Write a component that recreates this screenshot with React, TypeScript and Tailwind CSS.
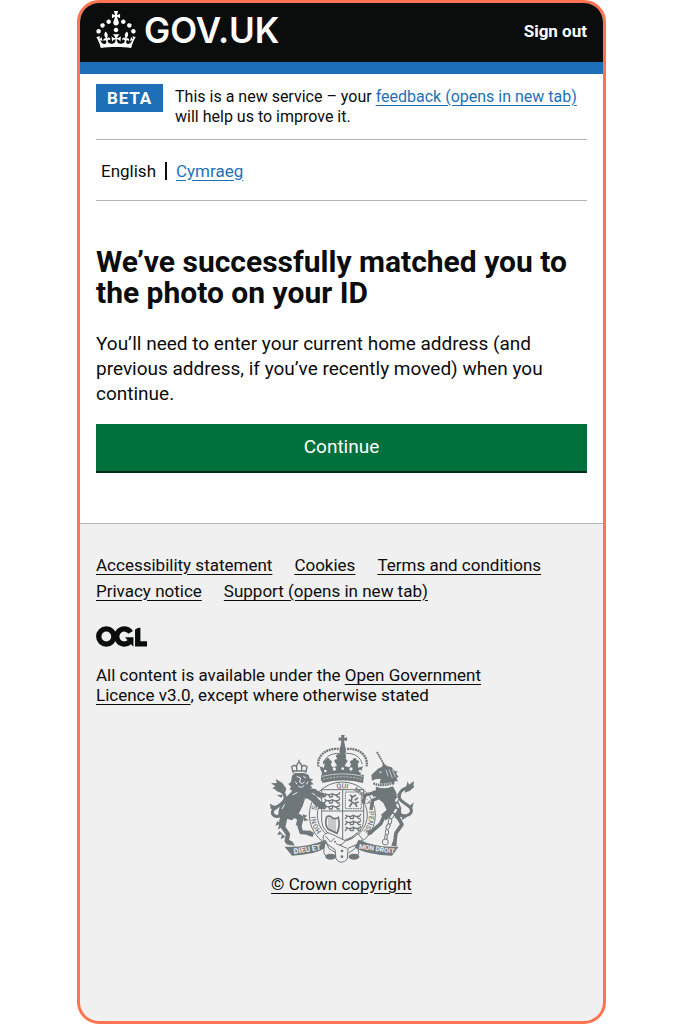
import React from "react";

type TLink = { label: string; href: string };

const footerLinks: TLink[] = [
  { label: "Accessibility statement", href: "#accessibility" },
  { label: "Cookies", href: "#cookies" },
  { label: "Terms and conditions", href: "#terms" },
  { label: "Privacy notice", href: "#privacy" },
  { label: "Support (opens in new tab)", href: "#support" },
];

const Crown = () => (
  <svg viewBox="0 0 32 30" className="w-10 h-[37px]" fill="currentColor" aria-hidden="true">
    <path d="M22.6 10.4c-1 .4-2-.1-2.4-1-.4-.9.1-2 1-2.4.9-.4 2 .1 2.4 1s-.1 2-1 2.4m-5.9 6.7c-.9.4-2-.1-2.4-1-.4-.9.1-2 1-2.4.9-.4 2 .1 2.4 1s-.1 2-1 2.4m10.8-3.7c-1 .4-2-.1-2.4-1-.4-.9.1-2 1-2.4.9-.4 2 .1 2.4 1s0 2-1 2.4m3.3 4.8c-1 .4-2-.1-2.4-1-.4-.9.1-2 1-2.4.9-.4 2 .1 2.4 1s-.1 2-1 2.4M17 4.7l2.3 1.2V2.5l-2.3.7-.2-.2.9-3h-3.4l.9 3-.2.2c-.1.1-2.3-.7-2.3-.7v3.4L15 4.7c.1.1.1.2.2.2l-1.3 4c-.1.2-.1.4-.1.6 0 1.1.8 2 1.9 2.2h.7c1-.2 1.9-1.1 1.9-2.1 0-.2 0-.4-.1-.6l-1.3-4c-.1-.2 0-.2.1-.3m-7.6 5.7c.9.4 2-.1 2.4-1 .4-.9-.1-2-1-2.4-.9-.4-2 .1-2.4 1s0 2 1 2.4m-5 3c.9.4 2-.1 2.4-1 .4-.9-.1-2-1-2.4-.9-.4-2 .1-2.4 1s.1 2 1 2.4m-3.2 4.8c.9.4 2-.1 2.4-1 .4-.9-.1-2-1-2.4-.9-.4-2 .1-2.4 1s0 2 1 2.4m14.8 11c4.4 0 8.6.3 12.3.8 1.1-4.5 2.4-7 3.7-8.8l-2.5-.9c.2 1.3.3 1.9 0 2.7-.4-.4-.8-1.1-1.1-2.3l-1.2 4c.7-.5 1.3-.8 2-.9-1.1 2.5-2.6 3.1-3.5 3-1.1-.2-1.7-1.2-1.5-2.1.3-1.2 1.5-1.5 2.1-.1 1.1-2.3-.8-3-2-2.3 1.9-1.9 2.1-3.5.6-5.6-2.1 1.6-2.1 3.2-1.2 5.5-1.2-1.4-3.2-.6-2.5 1.6.9-1.4 2.1-.5 1.9.8-.2 1.1-1.7 2.1-3.5 1.9-2.7-.2-2.9-2.1-2.9-3.6.7-.1 1.9.5 2.9 1.9l.4-4.3c-1.1 1.1-2.1 1.4-3.2 1.4.4-1.2 2.1-3 2.1-3h-5.4s1.7 1.9 2.1 3c-1.1 0-2.1-.2-3.2-1.4l.4 4.3c1-1.4 2.2-2 2.9-1.9-.1 1.5-.2 3.4-2.9 3.6-1.9.2-3.4-.8-3.5-1.9-.2-1.3 1-2.2 1.9-.8.7-2.3-1.2-3-2.5-1.6.9-2.2.9-3.9-1.2-5.5-1.5 2-1.3 3.7.6 5.6-1.2-.7-3.1 0-2 2.3.6-1.4 1.8-1.1 2.1.1.2.9-.3 1.9-1.5 2.1-.9.2-2.4-.5-3.5-3 .6 0 1.2.3 2 .9l-1.2-4c-.3 1.1-.7 1.9-1.1 2.3-.3-.8-.2-1.4 0-2.7l-2.9.9C1.3 23 2.6 25.5 3.7 30c3.7-.5 7.9-.8 12.3-.8" />
  </svg>
);

const OglLogo = () => (
  <svg viewBox="0 0 484 196" className="w-[51px] h-[21px]" role="img" aria-label="Open Government Licence">
    <g fill="none" stroke="#0b0c0c" strokeWidth="51">
      <circle cx="98" cy="98" r="72" />
      <path d="M329 59A72 72 0 1 0 318 150" />
      <path d="M396 16V168H484" />
    </g>
    <path fill="#0b0c0c" d="M275 106H355V194H352Z" />
    <path fill="#f0f0f0" d="M368 0H424L368 34Z" />
  </svg>
);

const ShieldLions = ({ x, y }: { x: number; y: number }) => (
  <g transform={`translate(${x} ${y})`} fill="none" stroke="#6f777b" strokeWidth="4" strokeLinecap="round">
    {[0, 18, 36].map((row) => (
      <g key={row} transform={`translate(0 ${row})`}>
        <path d="M5 2l5 3h10l7-3 9 4 10-2M8 6l-5 6M16 6l3 6h5M28 6l-2 6M38 6l5 6h5M46 4l3-5" />
      </g>
    ))}
  </g>
);

// supporters, shield and garter under the crown
const RoyalArms = () => (
  <svg viewBox="18 12 432 390" className="w-36 h-[130px]" role="img" aria-label="Royal coat of arms">
    <defs>
      <path id="garter" d="M182 318A80 80 0 1 1 288 318" />
    </defs>

    {/* crown */}
    <g fill="#6f777b">
      <path d="M231 18h11l-2 9 9-2v11l-9-2 3 16 3 18-4 12h-12l-4-12 4-18 2-16-8 2V25l8 2z" />
      <circle cx="236" cy="60" r="9" />
      <path d="M174 132l-8-20 14 4 2-12c-8-3-5-12 3-10 0-9 13-9 12 0 8-1 9 8 3 11l5 10 14-4-5-10c-7-4-1-13 6-9l-5-13 16-8 15 8-4 13c7-4 12 5 5 9l-5 10 14 4 6-10c-7-3-4-12 4-11 0-9 12-9 12 0 8-2 10 7 3 10l2 12 14-4-8 22-3 21q-60-14-116 0z" />
    </g>
    <g fill="none" stroke="#6f777b">
      <path strokeWidth="7" strokeDasharray="6 2" d="M224 60c-36-4-66 20-61 52M249 60c36-4 64 20 59 52" />
      <path strokeWidth="3" d="M226 73c-26-1-44 12-48 32M246 73c26-1 44 12 49 32M229 76v24M244 76v24" />
    </g>
    <g fill="#f0f0f0">
      <circle cx="184" cy="126" r="4" />
      <circle cx="211" cy="120" r="5" />
      <circle cx="236" cy="119" r="4" />
      <circle cx="261" cy="120" r="5" />
      <circle cx="288" cy="126" r="4" />
    </g>

    {/* garter */}
    <circle cx="235" cy="258" r="87" fill="#f0f0f0" stroke="#f0f0f0" strokeWidth="24" />
    <g fill="none" stroke="#6f777b" strokeWidth="3">
      <circle cx="235" cy="258" r="99" />
      <circle cx="235" cy="258" r="75" />
    </g>
    <path fill="#6f777b" d="M172 138q64-16 128 0l-3 24q-60-16-122 0z" />
    <path fill="none" stroke="#f0f0f0" strokeWidth="2" strokeDasharray="6 4" d="M178 151q58-15 116 0" />
    <path fill="none" stroke="#f0f0f0" strokeWidth="2" d="M174 142q62-15 124 0" />

    {/* shield */}
    <path fill="#f0f0f0" stroke="#6f777b" strokeWidth="3" d="M173 182H299V276q0 36-63 61q-63-25-63-61z" />
    <path fill="none" stroke="#6f777b" strokeWidth="3" d="M236 182V336M173 246H299" />
    <ShieldLions x={178} y={192} />
    <ShieldLions x={241} y={257} />
    <path fill="none" stroke="#6f777b" strokeWidth="3" strokeDasharray="5 2" d="M244 189H292V239H244z" />
    <path fill="none" stroke="#6f777b" strokeWidth="5" d="M258 198l8 6 10-6M264 202l-2 16 14 8 2 8M262 218l-8-6M264 222l-8 12M272 214l10-8M274 222l10-3" />
    <path fill="none" stroke="#6f777b" strokeWidth="5" d="M188 263q-7 24 5 38l26 12q10-22 4-48q-12 8-20 0q-6-6-15-2" />
    <path fill="none" stroke="#6f777b" strokeWidth="2" d="M195 266v34M201 269v34M207 270v36M213 271v38" />

    <g fill="#6f777b" fontFamily="Roboto, sans-serif" fontSize="21" fontWeight="500" textAnchor="middle">
      <text><textPath href="#garter" startOffset="10%">HONI</textPath></text>
      <text><textPath href="#garter" startOffset="27%">SOIT</textPath></text>
      <text><textPath href="#garter" startOffset="50%">QUI</textPath></text>
      <text><textPath href="#garter" startOffset="67%">MAL·Y</textPath></text>
      <text><textPath href="#garter" startOffset="88%">PENSE</textPath></text>
    </g>

    {/* belt buckle and strap */}
    <path fill="#f0f0f0" stroke="#6f777b" strokeWidth="3" d="M178 320q10-14 26-4l42 20q22-6 36-22l14 17q-16 18-44 27l-2 32q-18 20-34 0l-3-28-28-20q-12-10-7-22z" />
    <path fill="none" stroke="#6f777b" strokeWidth="3" d="M184 321l16 18 12-12M216 344l33 14M244 337l-12 10" />
    <g fill="#6f777b">
      <circle cx="213" cy="338" r="3" />
      <circle cx="230" cy="348" r="3" />
      <circle cx="234" cy="366" r="4" />
      <circle cx="234" cy="383" r="4" />
    </g>

    {/* lion */}
    <g fill="none" stroke="#6f777b" strokeLinejoin="round">
      <path strokeWidth="4" d="M88 132l-5-18q6-8 15-2 1-10 7-12 6 2 8 12 10-6 16 2l-4 18M86 126h40M98 112v12M113 112v12M105 92v8" />
      <path strokeWidth="20" d="M122 192l26 16 18 20" />
      <path strokeWidth="14" d="M126 184l24 2 20 14" />
      <path strokeWidth="22" d="M62 252l-8 38" />
      <path strokeWidth="13" d="M54 290l18 26-4 20 14 8" />
      <path strokeWidth="18" d="M78 248l32 20-6 22" />
      <path strokeWidth="12" d="M104 284l8 26 28 2" />
      <path strokeWidth="9" strokeLinecap="round" d="M56 258c-18 10-34 2-30-12 4-12 30-18 36-34 4-14-4-26-22-30" />
    </g>
    <g fill="#6f777b">
      <path d="M88 176q-6 18-26 30-18 20-20 56l42 12q28-22 38-62l22-14-14-24z" />
      <path d="M84 140l8-8 28 0 14 6 3 10 11 4-8 5 9 9-10 2 6 9-10 2 2 10-14 1-8 10-14-5-12 4-4-14-8-4 4-8-8-8 8-6z" />
      <path d="M43 186l-18-8 9-6-13-9 18-1-4-12 20 12 12 17-5 16-8-12zM20 240l-2-16 12 6 16-1-7 12zM52 206l-14-8 19-1z" />
      <path d="M40 276l-6 14 12-4-5 16 16-10zM46 306l-6 12 14-2-4 14 14-6zM116 256l14 4-8 6 12 8-14 2zM160 222l18-4 8 10-6 12-16 0zM164 190l16 2 4 12-14 2zM70 336l16 2 6 12-26-4zM136 304l14 8-4 12-18-6z" />
    </g>
    <g fill="none" stroke="#f0f0f0" strokeWidth="3">
      <path d="M98 142l10 4M118 142l8 5M110 146l-3 14 8 4 7-6M103 172l10 3 8-6M94 158l5 8M131 158l-3 8" />
      <path d="M86 198l14-8M132 220l-10-12M62 226l-8 14" />
    </g>

    {/* unicorn */}
    <g fill="none" stroke="#6f777b" strokeLinejoin="round">
      <path strokeWidth="18" d="M360 192l-34 2" />
      <path strokeWidth="10" d="M336 190l-32 8-6 18M350 204l-24 10-4 22" />
      <path strokeWidth="22" d="M384 244l-26 22" />
      <path strokeWidth="11" d="M360 262l-10 22-30 26M400 262l14 24-18 26-4 30" />
      <path strokeWidth="22" d="M394 236l12 30" />
      <path strokeWidth="9" strokeLinecap="round" d="M406 256c20 10 38 0 36-14-2-14-32-20-36-36-2-14 8-28 26-30" />
    </g>
    <g fill="#6f777b">
      <path d="M322 138l20-19 12-6 4-11 11 9 14 4 8 10 10 3-5 6 8 9-7 4 5 10-10 0-2 10-44 0 4-18-16 2-10 4z" />
      <path d="M336 172q24 12 50 0 14 18 12 34l14 32-4 28-34-10-16-34-24-20z" />
      <path d="M424 181l7-24 4 10 15-11-2 14 5 1-15 14-16 6zM407 204l-10-10 16 3zM438 230l11-10-4 18zM416 260l-4 14 16-9zM310 304l14 0 2 10-14 6zM294 212l10 2 0 10-10 0zM318 232l9 2-1 10-10-2zM386 338l12 2 0 12-16-2z" />
    </g>
    <path fill="none" stroke="#6f777b" strokeWidth="6" strokeDasharray="5 2" d="M339 69l20 36" />
    <path fill="none" stroke="#f0f0f0" strokeWidth="2" d="M375 121l10 26M385 120l9 24M366 122l6 20" />
    <path fill="#f0f0f0" d="M346 127l8 2-5 4z" />
    <path fill="none" stroke="#f0f0f0" strokeWidth="12" d="M334 166q26 10 50-2" />
    <path fill="none" stroke="#6f777b" strokeWidth="7" strokeDasharray="5 2" d="M328 163q28 12 60-2" />
    <g fill="#f0f0f0" stroke="#6f777b" strokeWidth="3">
      <ellipse cx="398" cy="212" rx="5" ry="9" transform="rotate(30 398 212)" />
      <ellipse cx="401" cy="230" rx="5" ry="9" transform="rotate(-25 401 230)" />
      <ellipse cx="394" cy="246" rx="5" ry="9" transform="rotate(35 394 246)" />
      <ellipse cx="384" cy="261" rx="5" ry="9" transform="rotate(35 384 261)" />
      <ellipse cx="378" cy="277" rx="5" ry="9" transform="rotate(10 378 277)" />
      <ellipse cx="372" cy="293" rx="5" ry="9" transform="rotate(25 372 293)" />
      <ellipse cx="369" cy="310" rx="5" ry="9" />
      <ellipse cx="366" cy="324" rx="4" ry="8" />
      <circle cx="364" cy="339" r="9" />
    </g>

    {/* motto */}
    <g fill="#6f777b">
      <path d="M62 353q62 4 124-21l-4 26q-30 20-98 22z" />
      <path d="M404 353q-62 4-120-21l-12 24q40 22 112 24z" />
      <ellipse cx="200" cy="383" rx="16" ry="9" />
      <ellipse cx="270" cy="383" rx="16" ry="9" />
    </g>
    <path fill="none" stroke="#6f777b" strokeWidth="3" d="M180 358q-4 14 6 24M186 336l8 22 22 14M284 336l-10 22-20 14M282 360q6 10-2 22" />
    <g fill="#f0f0f0" fontFamily="Roboto, sans-serif" fontWeight="700">
      <text x="90" y="375" fontSize="23" transform="rotate(-9 90 375)">DIEU ET</text>
      <text x="284" y="359" fontSize="20" transform="rotate(8 284 359)">MON DROIT</text>
    </g>
  </svg>
);

const App = () => {
  return (
    <div className="min-h-screen flex bg-white px-[77px] font-['Roboto',sans-serif] text-[#0b0c0c]">
      <div className="flex-1 min-w-0 flex flex-col overflow-hidden rounded-[22px] border-3 border-[#ff7350] bg-[#f0f0f0]">
        <header className="flex items-center justify-between h-[71px] px-4 pb-[2px] bg-[#0b0c0c] border-b-12 border-[#1d70b8] text-white">
          <a href="#home" className="flex items-center gap-2 pb-1">
            <Crown />
            <span className="font-['Inter',sans-serif] text-[35px] leading-10 font-semibold">GOV.UK</span>
          </a>
          <a href="#sign-out" className="text-[17px] font-bold">Sign out</a>
        </header>

        <main className="bg-white px-4 pb-[50px] border-b border-[#b1b4b6]">
          <div className="flex items-start gap-3 pt-[10px] pb-3 border-b border-[#b1b4b6] text-base leading-5">
            <strong className="px-[11px] py-1 bg-[#1d70b8] text-white text-[17px] leading-5 font-bold tracking-wider">BETA</strong>
            <p className="pt-[3px]">
              This is a new service – your{" "}
              <a href="#feedback" className="text-[#1d70b8] underline underline-offset-3">feedback (opens in new tab)</a>{" "}
              will help us to improve it.
            </p>
          </div>

          <nav aria-label="Language" className="flex items-center h-[61px] pt-px pl-[5px] border-b border-[#b1b4b6] text-[17px] leading-5">
            <span>English</span>
            <span className="w-[2px] h-[18px] mx-[9px] bg-[#0b0c0c]" />
            <a href="#cy" className="text-[#1d70b8] underline underline-offset-3">Cymraeg</a>
          </nav>

          <h1 className="mt-[45px] text-[30px] leading-[31px] font-bold">
            We’ve successfully matched you to the photo on your ID
          </h1>
          <p className="mt-[23px] text-[19px] leading-[25px]">
            You’ll need to enter your current home address (and previous address, if you’ve recently moved) when you continue.
          </p>
          <button type="button" className="w-full h-[49px] mt-[18px] bg-[#00703c] border-b-2 border-[#002d18] text-white text-[19px] cursor-pointer">
            Continue
          </button>
        </main>

        <footer className="px-4 pt-7 pb-8 text-[17px] leading-5">
          <ul className="flex flex-wrap gap-x-[22px]">
            {footerLinks.map((link) => (
              <li key={link.href} className="leading-[26px]">
                <a href={link.href} className="underline underline-offset-3">{link.label}</a>
              </li>
            ))}
          </ul>
          <div className="mt-[22px]">
            <OglLogo />
          </div>
          <p className="mt-[18px] max-w-[400px]">
            All content is available under the{" "}
            <a href="#ogl" className="underline underline-offset-3">Open Government Licence v3.0</a>, except where otherwise stated
          </p>
          <a href="#copyright" className="flex flex-col items-center gap-[11px] mt-7 underline underline-offset-3">
            <RoyalArms />
            © Crown copyright
          </a>
        </footer>
      </div>
    </div>
  );
};

export default App;
